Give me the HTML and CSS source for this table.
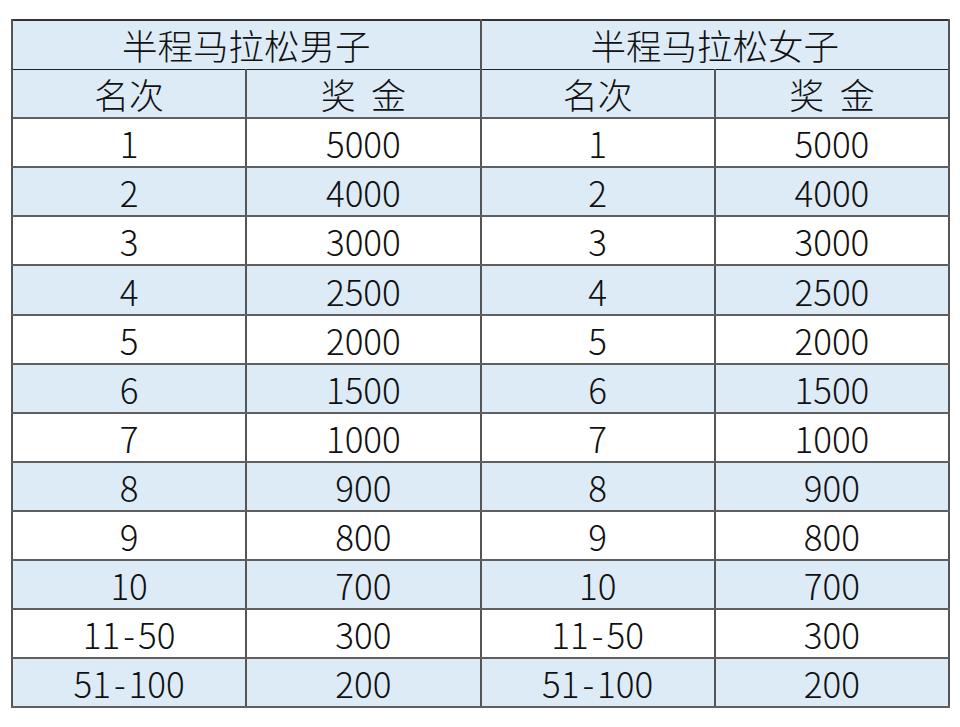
FILE: index.html
```html
<!DOCTYPE html>
<html lang="zh">
<head>
<meta charset="utf-8">
<title>半程马拉松奖金</title>
<link rel="stylesheet" href="styles.css">
</head>
<body>
<table class="prize">
  <colgroup><col class="c"><col class="c"><col class="c"><col class="c"></colgroup>
  <thead>
    <tr class="blue title"><th colspan="2">半程马拉松男子</th><th colspan="2">半程马拉松女子</th></tr>
    <tr class="blue sub"><th>名次</th><th>奖&nbsp;&nbsp;金</th><th>名次</th><th>奖&nbsp;&nbsp;金</th></tr>
  </thead>
  <tbody>
    <tr><td>1</td><td>5000</td><td>1</td><td>5000</td></tr>
    <tr class="blue"><td>2</td><td>4000</td><td>2</td><td>4000</td></tr>
    <tr><td>3</td><td>3000</td><td>3</td><td>3000</td></tr>
    <tr class="blue"><td>4</td><td>2500</td><td>4</td><td>2500</td></tr>
    <tr><td>5</td><td>2000</td><td>5</td><td>2000</td></tr>
    <tr class="blue"><td>6</td><td>1500</td><td>6</td><td>1500</td></tr>
    <tr><td>7</td><td>1000</td><td>7</td><td>1000</td></tr>
    <tr class="blue"><td>8</td><td>900</td><td>8</td><td>900</td></tr>
    <tr><td>9</td><td>800</td><td>9</td><td>800</td></tr>
    <tr class="blue"><td>10</td><td>700</td><td>10</td><td>700</td></tr>
    <tr><td>11<span class="dash">-</span>50</td><td>300</td><td>11<span class="dash">-</span>50</td><td>300</td></tr>
    <tr class="blue"><td>51<span class="dash">-</span>100</td><td>200</td><td>51<span class="dash">-</span>100</td><td>200</td></tr>
  </tbody>
</table>
</body>
</html>
```
FILE: styles.css
```css
html, body {
  margin: 0;
  padding: 0;
  background: #ffffff;
}
body {
  padding: 19px 0 0 11px;
}
.prize {
  border-collapse: collapse;
  table-layout: fixed;
  width: 937px;
  font-family: "Noto Sans CJK SC", "Noto Sans", sans-serif;
  font-weight: 300;
  font-size: 35px;
  color: #111111;
  border: 2px solid #333333;
}
.c {
  width: 234.25px;
}
.prize tr {
  height: 49.1px;
}
.prize th,
.prize td {
  padding: 0;
  text-align: center;
  vertical-align: middle;
  font-weight: 300;
  line-height: 1;
  border-top: 2px solid #5f5f5f;
  border-bottom: 2px solid #5f5f5f;
  border-left: 2px solid #555555;
  border-right: 2px solid #555555;
}
.prize thead th {
  border-top: 1px solid #222222;
  border-bottom: 1px solid #222222;
}
.prize .title th {
  font-size: 35.5px;
}
.dash {
  padding: 0 3px;
}
.blue {
  background: #ddebf7;
}
```
